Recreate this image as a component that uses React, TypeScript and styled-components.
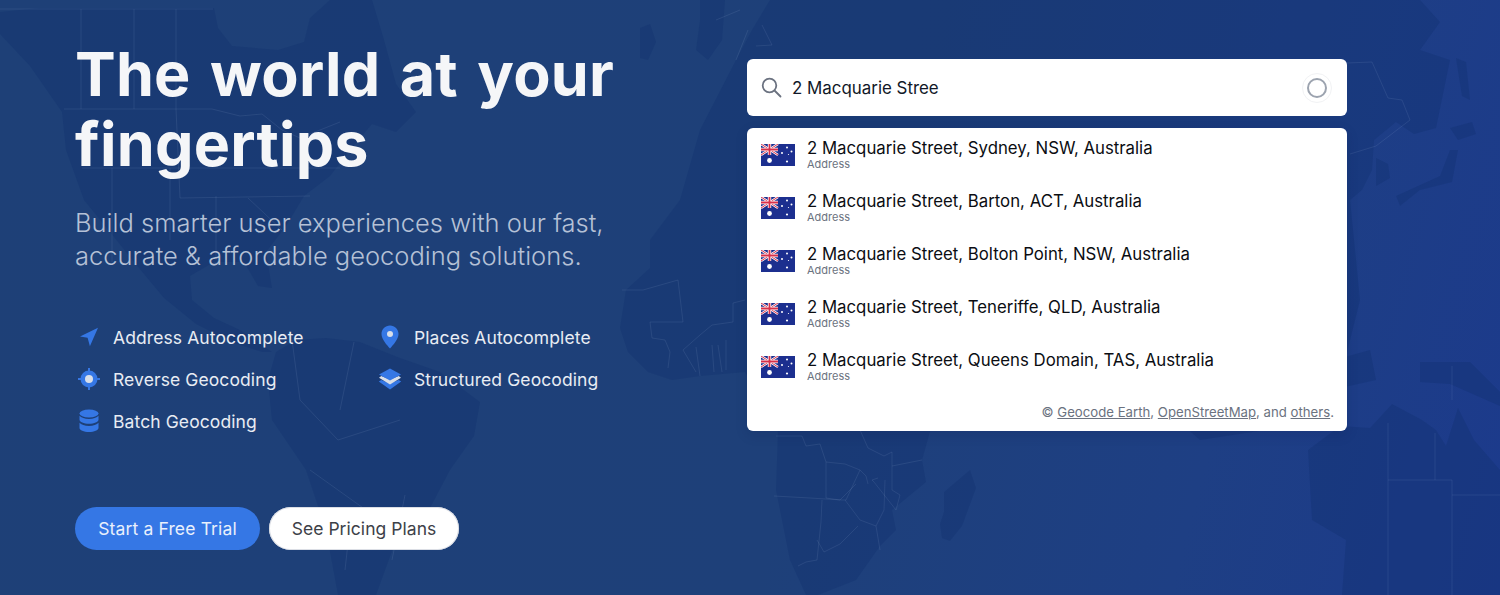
import * as React from "react";
import styled, { createGlobalStyle } from "styled-components";

const GlobalStyle = createGlobalStyle`
  html, body {
    margin: 0;
    padding: 0;
    height: 100%;
    overflow: hidden;
  }
  body {
    font-family: Inter, "Liberation Sans", sans-serif;
  }
  * {
    box-sizing: border-box;
  }
`;

const Hero = styled.section`
  position: relative;
  width: 100%;
  height: 595px;
  overflow: hidden;
  background: linear-gradient(105deg, #1e4077 0%, #1e4079 55%, #1e3f84 80%, #1c3a8c 100%);
`;

const WorldMap = styled.svg`
  position: absolute;
  inset: 0;
  width: 100%;
  height: 100%;
  .land {
    fill: rgba(14, 46, 108, 0.32);
    stroke: none;
  }
  .line {
    fill: none;
    stroke: rgba(190, 210, 240, 0.1);
    stroke-width: 1;
    stroke-linejoin: round;
  }
`;

const Content = styled.div`
  position: relative;
  display: flex;
  padding: 39px 153px 0 75px;
  justify-content: space-between;
`;

const LeftColumn = styled.div`
  width: 600px;
`;

const Title = styled.h1`
  margin: 0;
  font-family: "Inter", sans-serif;
  font-size: 61px;
  line-height: 70px;
  font-weight: 700;
  letter-spacing: 0.2px;
  word-spacing: 4.8px;
  color: #f5f6f8;
`;

const Lead = styled.p`
  margin: 27px 0 0;
  font-family: "Inter", sans-serif;
  font-size: 25.5px;
  line-height: 33px;
  font-weight: 300;
  color: #b5c1d6;
`;

const Features = styled.ul`
  display: grid;
  grid-template-columns: 301px 1fr;
  grid-auto-rows: 42px;
  margin: 44px 0 0;
  padding: 0;
  list-style: none;
`;

const Feature = styled.li`
  display: flex;
  align-items: center;
  gap: 10px;
  font-size: 17.5px;
  color: #e8ecf3;
  letter-spacing: 0.1px;
`;

const IconSlot = styled.span`
  display: flex;
  width: 28px;
  height: 28px;
  align-items: center;
  justify-content: center;
`;

const Actions = styled.div`
  display: flex;
  gap: 9px;
  margin-top: 65px;
`;

const Pill = styled.a<{ $primary?: boolean }>`
  display: flex;
  align-items: center;
  justify-content: center;
  height: 43px;
  width: ${(p) => (p.$primary ? "185px" : "190px")};
  border-radius: 22px;
  font-size: 17.5px;
  letter-spacing: ${(p) => (p.$primary ? "0.15px" : "0.05px")};
  background: ${(p) => (p.$primary ? "#3577e5" : "#ffffff")};
  color: ${(p) => (p.$primary ? "#e9f0fc" : "#3d4148")};
  box-shadow: ${(p) => (p.$primary ? "none" : "0 0 0 1px rgba(210,214,222,.8) inset")};
`;

const RightColumn = styled.div`
  width: 600px;
  margin-top: 20px;
`;

const SearchBox = styled.div`
  display: flex;
  align-items: center;
  height: 57px;
  padding: 0 15px 0 14px;
  gap: 10px;
  background: #ffffff;
  border-radius: 6px;
`;

const SearchInput = styled.input`
  flex: 1;
  border: 0;
  outline: 0;
  padding: 0;
  min-width: 0;
  background: transparent;
  font-family: "Inter", sans-serif;
  font-size: 16.9px;
  color: #111827;
`;

const Spinner = styled.span`
  display: flex;
  width: 30px;
  height: 30px;
  align-items: center;
  justify-content: center;
  border: 1px solid #f1f2f4;
  border-radius: 50%;
  &::after {
    content: "";
    width: 16px;
    height: 16px;
    border: 2px solid #9ca3af;
    border-radius: 50%;
  }
`;

const Results = styled.div`
  margin-top: 12px;
  height: 303px;
  background: #ffffff;
  border-radius: 6px;
  box-shadow: 0 4px 12px rgba(10, 30, 80, 0.18);
`;

const Result = styled.div`
  display: flex;
  align-items: center;
  gap: 12px;
  height: 53px;
  padding: 0 14px;
`;

const ResultText = styled.div`
  display: flex;
  flex-direction: column;
  margin-top: -3px;
`;

const ResultName = styled.span`
  font-size: 16.8px;
  line-height: 23px;
  color: #0b0d12;
`;

const ResultKind = styled.span`
  font-size: 11px;
  line-height: 11px;
  margin-top: -1px;
  color: #6b7280;
`;

const Credits = styled.div`
  margin-top: 9px;
  padding-right: 13px;
  text-align: right;
  font-size: 13.2px;
  line-height: 20px;
  color: #6b7280;
  a {
    color: inherit;
    text-decoration: underline;
  }
`;

const BLUE = "#3577e5";
const DOT = "#d9dfe9";

const ArrowIcon = () => (
  <svg width="20" height="20" viewBox="0 0 20 20">
    <path fill={BLUE} d="M19 .8 1 9.500l7.600 1.300 2.300 8.400z" />
  </svg>
);

const PinIcon = () => (
  <svg width="18" height="24" viewBox="0 0 18 24">
    <path fill={BLUE} d="M9 .5C4.200.5.500 4.200.500 9c0 5.400 5.600 11.200 8.500 14.500C11.900 20.200 17.500 14.400 17.500 9 17.500 4.200 13.800.500 9 .500z" />
    <circle cx="9" cy="9" r="3" fill={DOT} />
  </svg>
);

const TargetIcon = () => (
  <svg width="24" height="24" viewBox="0 0 24 24">
    <path stroke={BLUE} strokeWidth="2" d="M12 1v4M12 19v4M1 12h4M19 12h4" />
    <circle cx="12" cy="12" r="8.500" fill={BLUE} />
    <circle cx="12" cy="12" r="4" fill={DOT} />
  </svg>
);

const StackIcon = () => (
  <svg width="24" height="22" viewBox="0 0 24 22">
    <path fill={BLUE} d="M12 15.500 3.300 12 .800 13.500 12 21.500l11.200-8L20.700 12z" />
    <path fill={DOT} d="M12 11.500 3.300 8 1 9.800 12 16.500l11-6.700L20.700 8z" />
    <path fill={BLUE} d="M12 .500 1 6.500l11 6 11-6z" />
  </svg>
);

const DatabaseIcon = () => (
  <svg width="20" height="24" viewBox="0 0 20 24">
    <ellipse cx="10" cy="4.500" rx="9.500" ry="4" fill={BLUE} />
    <path fill={BLUE} d="M.5 6.800v4c0 2.200 4.300 4 9.500 4s9.500-1.800 9.500-4v-4c-1.500 2-5.300 3.200-9.500 3.200S2 8.800.500 6.800z" />
    <path fill={BLUE} d="M.5 13.800v5.200c0 2.200 4.300 4 9.500 4s9.500-1.800 9.500-4v-5.200c-1.500 2-5.300 3.200-9.500 3.200s-8-1.200-9.500-3.200z" />
  </svg>
);

const SearchIcon = () => (
  <svg width="21" height="21" viewBox="0 0 21 21" fill="none" stroke="#6b7280" strokeWidth="1.800">
    <circle cx="8.500" cy="8.500" r="6.800" />
    <path strokeLinecap="round" d="m13.500 13.500 6 6" />
  </svg>
);

const AuFlag = () => (
  <svg width="34" height="22" viewBox="0 0 34 22">
    <rect width="34" height="22" fill="#1c2f8f" />
    <path stroke="#fff" strokeWidth="2.400" d="M0 0l17 11M17 0 0 11" />
    <path stroke="#d8304a" strokeWidth="1" d="M0 0l17 11M17 0 0 11" />
    <path stroke="#fff" strokeWidth="3.400" d="M8.500 0v11M0 5.500h17" />
    <path stroke="#d8304a" strokeWidth="1.800" d="M8.500 0v11M0 5.500h17" />
    <circle cx="8.500" cy="16.500" r="2.400" fill="#fff" />
    <g fill="#fff">
      <circle cx="26" cy="3.500" r="1" />
      <circle cx="26" cy="17.500" r="1.100" />
      <circle cx="21" cy="9" r="1" />
      <circle cx="30.500" cy="7.500" r="1" />
      <circle cx="27.500" cy="10.500" r=".6" />
    </g>
  </svg>
);

const places = [
  "2 Macquarie Street, Sydney, NSW, Australia",
  "2 Macquarie Street, Barton, ACT, Australia",
  "2 Macquarie Street, Bolton Point, NSW, Australia",
  "2 Macquarie Street, Teneriffe, QLD, Australia",
  "2 Macquarie Street, Queens Domain, TAS, Australia",
];

const MapBackdrop = () => (
  <WorldMap viewBox="0 0 1500 595" aria-hidden="true">
    {/* north america, hudson bay left open */}
    <path className="land" d="M0 12 40 8 214 8 218 28 232 46 278 50 304 42 310 18 330 0 372 0 384 40 396 84 416 112 396 132 372 124 350 150 330 176 304 196 286 226 266 252 272 288 258 286 244 262 214 262 190 276 192 300 214 318 240 330 272 352 262 352 232 342 196 324 164 298 134 262 110 232 84 200 66 150 62 112 30 66 0 34z" />
    {/* south america */}
    <path className="land" d="M276 352 296 340 326 338 360 342 400 358 440 372 480 402 474 436 450 470 430 508 396 540 376 595 338 595 326 530 306 470 272 420 268 380z" />
    {/* eurasia and north africa, passes behind the panel */}
    <path className="land" d="M700 0H725L722 40 708 60 696 50 700 20zM736 60 752 30 770 0H1420L1440 22 1420 50 1450 60 1436 128 1414 134 1396 122 1374 140 1372 170 1362 190 1350 200 1360 300 1330 420 1200 440 1040 300 950 360 922 460 926 482 892 510 896 530 880 546 856 580 818 595 806 595 790 560 776 490 778 432 745 372 700 376 672 380 648 372 628 352 620 328 626 290 650 268 650 240 680 200 700 130z" />
    {/* madagascar */}
    <path className="land" d="M970 470 976 488 962 526 950 541 942 538 940 524 944 512 944 492z" />
    {/* iceland, britain */}
    <path className="land" d="M640 28 650 24 656 42 648 60 640 58z" />
    {/* japan, korea, sakhalin, kamchatka */}
    <path className="land" d="M1396 196 1440 176 1450 150 1458 150 1452 182 1420 190 1400 206z" />
    <path className="land" d="M1376 158 1388 164 1390 178 1376 186z" />
    <path className="land" d="M1456 58 1466 62 1470 100 1462 96z" />
    <path className="land" d="M1450 128 1472 122 1476 134 1458 140z" />
    {/* indonesia, png */}
    <path className="land" d="M1266 378 1310 388 1300 396 1262 386z" />
    <path className="land" d="M1320 364 1370 350 1376 380 1340 388z" />
    <path className="land" d="M1420 362 1470 362 1500 392 1500 406 1450 384 1420 382z" />
    {/* australia */}
    <path className="land" d="M1308 450 1340 426 1370 428 1392 404 1422 420 1436 430 1446 446 1458 408 1474 440 1500 470V595H1342L1346 540 1312 520z" />

    {/* state and country borders */}
    <path className="line" d="M0 9H213M81 9V109M134 9V109M176 9V109M64 109H212L240 116 262 114 282 130 300 138 340 122" />
    <path className="line" d="M82 168H340M112 168V262M170 168V240M216 196V260M176 109 180 198 310 196M248 198 282 230" />
    <path className="line" d="M292 340 300 400 338 440 400 420M354 342 340 410M310 470 380 520M350 525 345 570M405 495 392 560" />
    <path className="line" d="M622 290H643L678 280 683 322H650L652 338 665 340 670 352 668 368M683 350 700 335 712 325 733 322 733 303 745 300M683 350 696 372M696 347 700 376M712 345 714 372M718 345 722 372M726 340 726 370" />
    <path className="line" d="M776 436 802 436 806 446 820 444 826 462 845 464 860 470 866 476 868 484M826 462 826 498 840 500 856 484M860 430 868 448 884 456 892 452 892 490 900 495 896 510 874 482 872 480 878 478M892 466 922 460M774 496 810 498 842 500 846 500 860 470M822 500 821 522 817 560 806 562 798 566M845 500 860 520 876 526 884 510 885 480M876 526 880 550M817 540 824 552 840 544 858 526" />
    <path className="line" d="M716 20 740 10M736 60 748 30M762 25 772 45 756 46" />
    <path className="line" d="M1347 63 1372 62 1388 98 1402 100 1410 120 1376 146 1350 154" />
    <path className="line" d="M1388 423V595M1435 433V480M1388 480H1452V595M1452 495H1500M1452 366V400" />
  </WorldMap>
);

export default function App() {
  return (
    <Hero>
      <GlobalStyle />
      <MapBackdrop />
      <Content>
        <LeftColumn>
          <Title>
            The world at your
            <br />
            fingertips
          </Title>
          <Lead>
            Build smarter user experiences with our fast,
            <br />
            accurate &amp; affordable geocoding solutions.
          </Lead>
          <Features>
            <Feature>
              <IconSlot><ArrowIcon /></IconSlot>
              Address Autocomplete
            </Feature>
            <Feature>
              <IconSlot><PinIcon /></IconSlot>
              Places Autocomplete
            </Feature>
            <Feature>
              <IconSlot><TargetIcon /></IconSlot>
              Reverse Geocoding
            </Feature>
            <Feature>
              <IconSlot><StackIcon /></IconSlot>
              Structured Geocoding
            </Feature>
            <Feature>
              <IconSlot><DatabaseIcon /></IconSlot>
              Batch Geocoding
            </Feature>
          </Features>
          <Actions>
            <Pill $primary>Start a Free Trial</Pill>
            <Pill>See Pricing Plans</Pill>
          </Actions>
        </LeftColumn>
        <RightColumn>
          <SearchBox>
            <SearchIcon />
            <SearchInput readOnly value="2 Macquarie Stree" />
            <Spinner />
          </SearchBox>
          <Results>
            {places.map((place) => (
              <Result key={place}>
                <AuFlag />
                <ResultText>
                  <ResultName>{place}</ResultName>
                  <ResultKind>Address</ResultKind>
                </ResultText>
              </Result>
            ))}
            <Credits>
              © <a href="#">Geocode Earth</a>, <a href="#">OpenStreetMap</a>, and <a href="#">others</a>.
            </Credits>
          </Results>
        </RightColumn>
      </Content>
    </Hero>
  );
}
